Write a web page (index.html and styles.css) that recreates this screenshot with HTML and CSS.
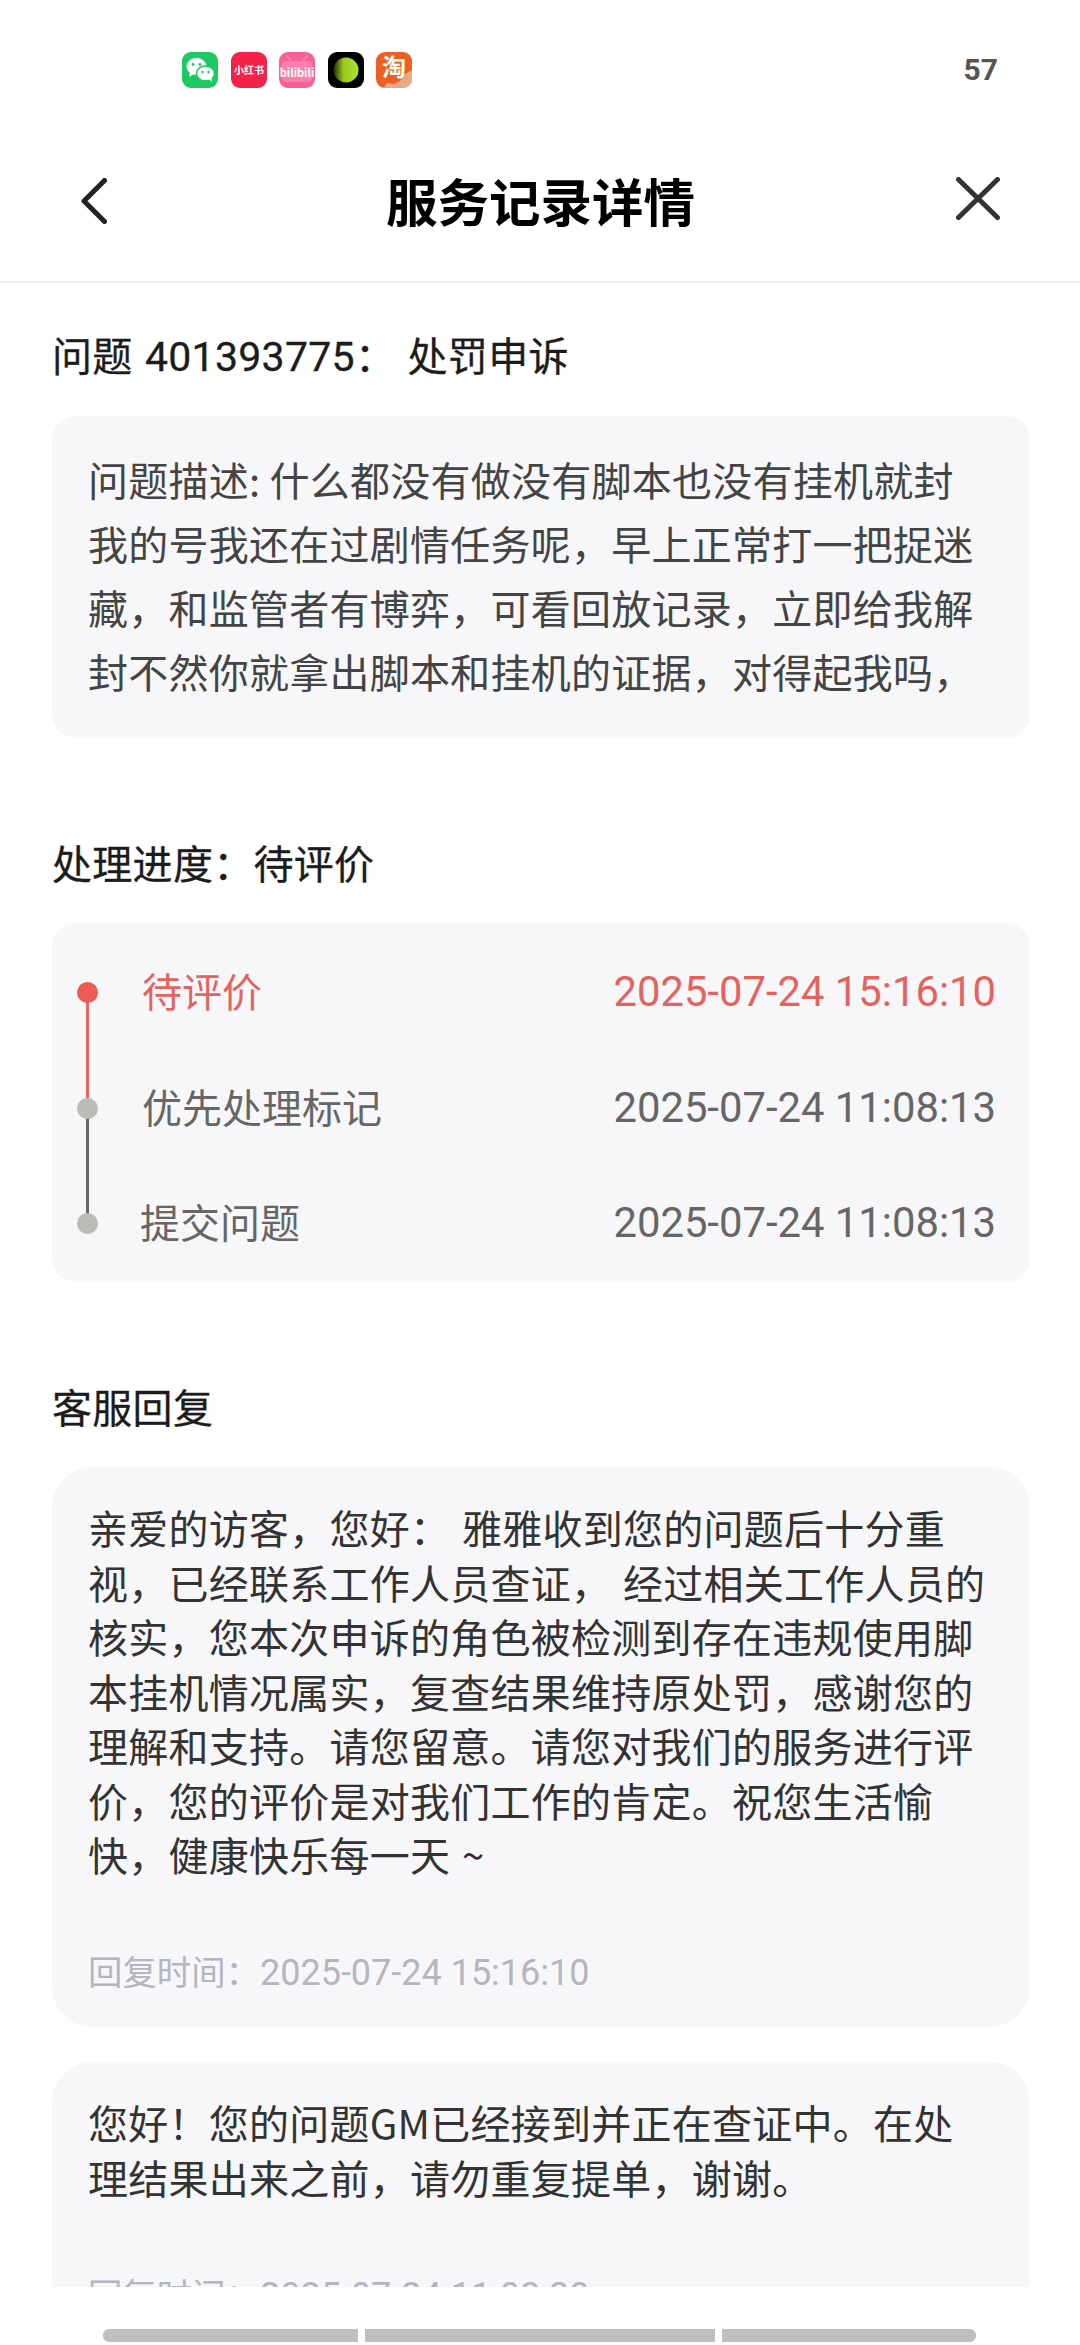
FILE: index.html
```html
<!doctype html>
<html lang="zh">
<head>
    <meta charset="utf-8">
    <title>服务记录详情</title>
    <link rel="stylesheet" href="styles.css">
</head>

<body>

<div class="status-bar">
    <div class="app-icons">
        <svg class="app-icon" viewBox="0 0 36 36">
            <rect width="36" height="36" rx="9" fill="#1dc963"/>
            <ellipse cx="14.500" cy="14.500" rx="10" ry="8.500" fill="#fff"/>
            <path d="M8 20l-1 5 5-3z" fill="#fff"/>
            <ellipse cx="23.500" cy="21.500" rx="9" ry="7.500" fill="#fff" stroke="#1dc963" stroke-width="1.500"/>
            <path d="M27 27l3 3-.5-5z" fill="#fff"/>
            <circle cx="11" cy="12.500" r="1.400" fill="#1dc963"/>
            <circle cx="18" cy="12.500" r="1.400" fill="#1dc963"/>
            <circle cx="20.500" cy="20" r="1.200" fill="#1dc963"/>
            <circle cx="26.500" cy="20" r="1.200" fill="#1dc963"/>
        </svg>
        <svg class="app-icon" viewBox="0 0 36 36">
            <rect width="36" height="36" rx="9" fill="#f5224a"/>
            <text class="icon-text" x="18" y="22" font-size="10">小红书</text>
        </svg>
        <svg class="app-icon" viewBox="0 0 36 36">
            <rect width="36" height="36" rx="9" fill="#fb5f97"/>
            <rect x="3" y="9" width="30" height="21" rx="4" fill="#fd7fac"/>
            <path d="M12 9L8 4M24 9l4-5" stroke="#fd7fac" stroke-width="2" stroke-linecap="round"/>
            <text class="icon-text" x="18" y="25" font-size="11">bilibili</text>
        </svg>
        <svg class="app-icon" viewBox="0 0 36 36">
            <defs>
                <linearGradient id="ball" x1="0" x2="1" y1="0" y2="0">
                    <stop offset="0" stop-color="#1f2a08"/>
                    <stop offset="0.4" stop-color="#97c820"/>
                    <stop offset="1" stop-color="#b0e22a"/>
                </linearGradient>
            </defs>
            <rect width="36" height="36" rx="9" fill="#000"/>
            <circle cx="18" cy="18" r="12.500" fill="url(#ball)"/>
        </svg>
        <svg class="app-icon" viewBox="0 0 36 36">
            <rect width="36" height="36" rx="9" fill="#ef5f22"/>
            <text class="icon-text" x="18" y="24" font-size="24">淘</text>
            <path d="M8 36l3-5 7 1 6-3 5-7 7-4v10a9 9 0 0 1-9 8z" fill="#e6b795" opacity="0.85"/>
        </svg>
    </div>
    <span class="battery">57</span>
</div>

<div class="nav-bar">
    <svg class="nav-back" viewBox="0 0 26 46">
        <path d="M23.500 2.500L3 23l20.500 20.500" fill="none" stroke="#222" stroke-width="5" stroke-linecap="round" stroke-linejoin="round"/>
    </svg>
    <h1 class="nav-title">服务记录详情</h1>
    <svg class="nav-close" viewBox="0 0 44 43">
        <path d="M2.500 2.500l39 38M41.500 2.500l-39 38" fill="none" stroke="#333" stroke-width="5" stroke-linecap="round"/>
    </svg>
</div>

<div class="page">
    <h2 class="section-title first">问题 <span class="num">401393775</span>： 处罚申诉</h2>
    <div class="card desc">问题描述: 什么都没有做没有脚本也没有挂机就封我的号我还在过剧情任务呢，早上正常打一把捉迷藏，和监管者有博弈，可看回放记录，立即给我解封不然你就拿出脚本和挂机的证据，对得起我吗，</div>

    <h2 class="section-title">处理进度：待评价</h2>
    <div class="card steps">
        <div class="step active">
            <span class="dot"></span>
            <span class="step-name">待评价</span>
            <span class="step-time">2025-07-24 15:16:10</span>
        </div>
        <div class="step next">
            <span class="dot"></span>
            <span class="step-name">优先处理标记</span>
            <span class="step-time">2025-07-24 11:08:13</span>
        </div>
        <div class="step last">
            <span class="dot"></span>
            <span class="step-name">提交问题</span>
            <span class="step-time">2025-07-24 11:08:13</span>
        </div>
    </div>

    <h2 class="section-title">客服回复</h2>
    <div class="card reply">
        <p class="reply-text">亲爱的访客，您好： 雅雅收到您的问题后十分重视，已经联系工作人员查证， 经过相关工作人员的核实，您本次申诉的角色被检测到存在违规使用脚本挂机情况属实，复查结果维持原处罚，感谢您的理解和支持。请您留意。请您对我们的服务进行评价，您的评价是对我们工作的肯定。祝您生活愉快，健康快乐每一天 ~</p>
        <p class="reply-time">回复时间：<span class="reply-date">2025-07-24 15:16:10</span></p>
    </div>
    <div class="card reply">
        <p class="reply-text short">您好！您的问题GM已经接到并正在查证中。在处理结果出来之前，请勿重复提单，谢谢。</p>
        <p class="reply-time">回复时间：<span class="reply-date">2025-07-24 11:08:20</span></p>
    </div>
</div>

<div class="bottom-bars">
    <span class="bar bar-left"></span>
    <span class="bar bar-mid"></span>
    <span class="bar bar-right"></span>
</div>

</body>
</html>
```

FILE: styles.css
```css
* {
    box-sizing: border-box;
}

body {
    margin: 0;
    width: 1080px;
    height: 2345px;
    overflow: hidden;
    background: #fff;
    color: #222;
    font-family: "Noto Sans CJK SC", "Noto Sans", sans-serif;
}

.status-bar {
    height: 88px;
    padding: 52px 82px 0 182px;
    display: flex;
    justify-content: space-between;
}

.app-icons {
    display: flex;
    gap: 12.500px;
}

.app-icon {
    width: 36px;
    height: 36px;
    overflow: visible;
}

.icon-text {
    fill: #fff;
    text-anchor: middle;
    font-weight: 700;
    font-family: "Noto Sans CJK SC", sans-serif;
}

.battery {
    font-family: "Roboto", sans-serif;
    font-size: 30px;
    font-weight: 700;
    line-height: 36px;
    color: #555;
}

.nav-bar {
    height: 195px;
    padding: 31px 80px 0 81px;
    display: grid;
    grid-template-columns: 1fr auto 1fr;
    align-items: center;
    border-bottom: 2px solid #eeeeee;
}

.nav-back {
    width: 26px;
    height: 46px;
    margin-top: 1px;
}

.nav-close {
    width: 44px;
    height: 43px;
    margin-bottom: 3px;
    justify-self: end;
}

.nav-title {
    margin: 0;
    font-size: 51.500px;
    line-height: 60px;
    font-weight: 700;
    color: #000;
}

.page {
    height: 2004px;
    padding: 0 50px 0 52px;
    overflow: hidden;
}

.section-title {
    margin: 0 0 33.500px;
    padding-top: 96px;
    font-size: 40px;
    line-height: 56px;
    font-weight: 400;
    letter-spacing: 0.3px;
    color: #1c1c1c;
    -webkit-text-stroke: 0.3px #1c1c1c;
}

.section-title.first {
    padding-top: 43px;
    word-spacing: 3px;
}

.num {
    font-family: "Roboto", sans-serif;
    font-size: 41px;
    line-height: 1;
}

.card {
    background: #f7f7fa;
    border-radius: 24px;
}

.desc {
    padding: 31.500px 50px 34.500px 36px;
    font-size: 40px;
    line-height: 64px;
    letter-spacing: 0.25px;
    color: #444;
}

.steps {
    padding: 12px 34px 0 25px;
    height: 358.500px;
}

.step {
    height: 115.500px;
    display: flex;
    align-items: center;
    position: relative;
    font-size: 40px;
    color: #666;
}

.dot {
    width: 21px;
    height: 21px;
    border-radius: 50%;
    background: #bbbbb7;
    flex: none;
    margin-right: 44px;
    position: relative;
    z-index: 1;
}

.step::after {
    content: "";
    position: absolute;
    left: 9px;
    top: 57px;
    width: 3px;
    height: 116px;
    background: #666;
}

.step.active::after {
    background: #e8625e;
}

.step.last::after {
    display: none;
}

.step.active {
    color: #e5635e;
}

.step.active .dot {
    background: #ee5a56;
}

.step-name {
    margin-bottom: 5px;
}

.step.last .step-name {
    margin-left: -2px;
}

.step-time {
    margin-left: auto;
    margin-bottom: 2px;
    font-family: "Roboto", sans-serif;
    font-size: 41.800px;
}

.reply {
    padding: 33px 43px 0 36px;
    border-radius: 40px;
    margin-bottom: 35px;
}

.reply-text {
    margin: 0;
    font-size: 40px;
    line-height: 54.500px;
    letter-spacing: 0.25px;
    word-spacing: 2.500px;
    color: #333;
}

.reply-text.short {
    padding-right: 30px;
}

.reply-time {
    margin: 0;
    padding: 65.500px 0 34px;
    font-size: 34.400px;
    line-height: 46px;
    color: #b5b5bf;
}

.reply-date {
    font-family: "Roboto", sans-serif;
    font-size: 36px;
    line-height: 1;
}

.bottom-bars {
    margin-top: 42px;
    padding-left: 103px;
    display: flex;
    gap: 7px;
}

.bar {
    height: 13px;
    background: #bfbfbf;
}

.bar-left {
    width: 255px;
    border-radius: 6px 0 0 6px;
}

.bar-mid {
    width: 350px;
}

.bar-right {
    width: 254px;
    border-radius: 0 6px 6px 0;
}
```
